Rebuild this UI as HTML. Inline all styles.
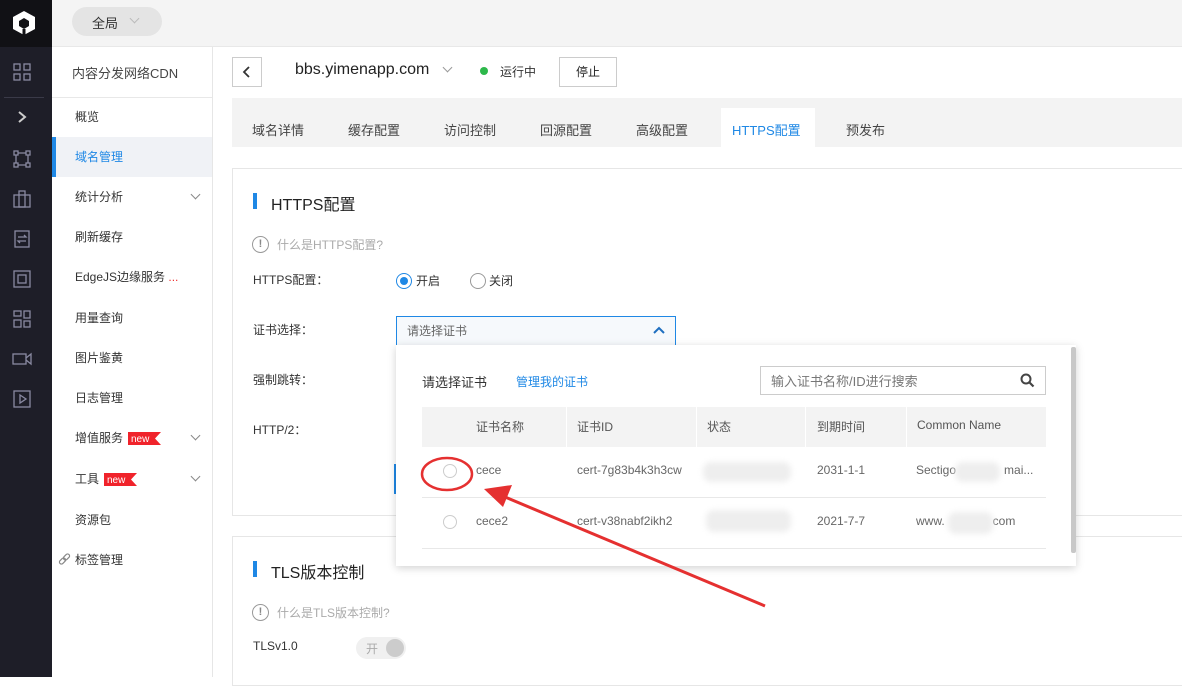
<!DOCTYPE html>
<html><head><meta charset="utf-8"><style>
*{margin:0;padding:0;box-sizing:border-box}
body{width:1182px;height:677px;overflow:hidden;position:relative;background:#fff;font-family:"Liberation Sans","Noto Sans CJK SC",sans-serif;font-size:12px;color:#333}
.a{position:absolute}
.mi{position:absolute;left:75px;font-size:12px;color:#333}
.tab{position:absolute;top:120px;font-size:13px;color:#444}
.chev{display:inline-block;width:7px;height:7px;border-right:1.5px solid #888;border-bottom:1.5px solid #888;transform:rotate(45deg)}
.th{position:absolute;top:418px;font-size:12px;color:#555}
.td{position:absolute;font-size:12px;color:#666}
.blur{position:absolute;background:#eee;border-radius:8px;filter:blur(3px)}
</style></head><body>
<div class="a" style="left:0;top:0;width:52px;height:677px;background:#1e1e28"></div>
<div class="a" style="left:0;top:0;width:52px;height:47px;background:#111115"></div>
<svg class="a" style="left:11px;top:10px" width="26" height="26" viewBox="0 0 26 26"><path d="M13 1 L24 7 V19 L13 25 L2 19 V7 Z" fill="#fff"/><path d="M13 8 L18 11 V16 L13 19 L8 16 V11 Z" fill="#111115"/><path d="M13 19 V25" stroke="#111115" stroke-width="3"/></svg>
<svg class="a" style="left:13px;top:63px" width="18" height="18"><g fill="none" stroke="#8a8aa2" stroke-width="1.3"><rect x="1" y="1" width="6" height="6"/><rect x="11" y="1" width="6" height="6"/><rect x="1" y="11" width="6" height="6"/><rect x="11" y="11" width="6" height="6"/></g></svg>
<div class="a" style="left:4px;top:97px;width:40px;height:1px;background:#3a3a48"></div>
<svg class="a" style="left:16px;top:110px" width="12" height="14"><path d="M3 2 L9 7 L3 12" fill="none" stroke="#ccc" stroke-width="2"/></svg>
<svg class="a" style="left:13px;top:150px" width="18" height="18"><g fill="none" stroke="#8a8aa2" stroke-width="1.3"><rect x="1" y="1" width="4" height="4"/><rect x="13" y="1" width="4" height="4"/><rect x="1" y="13" width="4" height="4"/><rect x="13" y="13" width="4" height="4"/><path d="M5 3H13M5 15H13M3 5V13M15 5V13"/></g></svg>
<svg class="a" style="left:13px;top:190px" width="18" height="18"><g fill="none" stroke="#8a8aa2" stroke-width="1.3"><rect x="1" y="5" width="16" height="12"/><rect x="6" y="1" width="6" height="16"/></g></svg>
<svg class="a" style="left:13px;top:230px" width="18" height="18"><g fill="none" stroke="#8a8aa2" stroke-width="1.3"><rect x="2" y="1" width="14" height="16"/><path d="M5 7H13L11 5M13 11H5L7 13"/></g></svg>
<svg class="a" style="left:13px;top:270px" width="18" height="18"><g fill="none" stroke="#8a8aa2" stroke-width="1.3"><rect x="1" y="1" width="16" height="16"/><rect x="5" y="5" width="8" height="8"/></g></svg>
<svg class="a" style="left:13px;top:310px" width="18" height="18"><g fill="none" stroke="#8a8aa2" stroke-width="1.3"><rect x="1" y="1" width="7" height="5"/><rect x="1" y="10" width="7" height="7"/><rect x="11" y="1" width="6" height="7"/><rect x="11" y="11" width="6" height="6"/></g></svg>
<svg class="a" style="left:12px;top:350px" width="20" height="18"><g fill="none" stroke="#8a8aa2" stroke-width="1.3"><rect x="1" y="4" width="13" height="10"/><path d="M14 8L19 4V14L14 10"/></g></svg>
<svg class="a" style="left:13px;top:390px" width="18" height="18"><g fill="none" stroke="#8a8aa2" stroke-width="1.3"><rect x="1" y="1" width="16" height="16"/><path d="M7 5L13 9L7 13Z"/></g></svg>
<div class="a" style="left:52px;top:0;width:1130px;height:47px;background:#f4f4f4;border-bottom:1px solid #e8e8e8"></div>
<div class="a" style="left:72px;top:7px;width:90px;height:29px;background:#e4e4e4;border-radius:15px"></div>
<div class="a" style="left:92px;top:13px;font-size:13px;color:#333">全局</div>
<span class="a chev" style="left:131px;top:15px;border-color:#bbb"></span>
<div class="a" style="left:52px;top:47px;width:161px;height:630px;background:#fff;border-right:1px solid #e6e6e6"></div>
<div class="a" style="left:72px;top:63px;font-size:13px;color:#444">内容分发网络CDN</div>
<div class="a" style="left:52px;top:97px;width:160px;height:1px;background:#e8e8e8"></div>
<div class="a" style="left:52px;top:137px;width:160px;height:40px;background:#f0f2f6"></div>
<div class="a" style="left:52px;top:137px;width:4px;height:40px;background:#1f88e5"></div>
<div class="mi" style="top:108px">概览</div>
<div class="mi" style="top:148px;color:#1f88e5">域名管理</div>
<div class="mi" style="top:188px">统计分析</div><span class="a chev" style="left:192px;top:191px"></span>
<div class="mi" style="top:228px">刷新缓存</div>
<div class="mi" style="top:268px">EdgeJS边缘服务 <span style="color:#e33">...</span></div>
<div class="mi" style="top:309px">用量查询</div>
<div class="mi" style="top:349px">图片鉴黄</div>
<div class="mi" style="top:389px">日志管理</div>
<div class="mi" style="top:429px">增值服务</div>
<svg class="a" style="left:128px;top:432px" width="33" height="13"><path d="M0 0H33L27 6.5L33 13H0Z" fill="#f0232b"/><text x="3" y="10" font-size="10" fill="#fff" font-family="Liberation Sans">new</text></svg>
<span class="a chev" style="left:192px;top:432px"></span>
<div class="mi" style="top:470px">工具</div>
<svg class="a" style="left:104px;top:473px" width="33" height="13"><path d="M0 0H33L27 6.5L33 13H0Z" fill="#f0232b"/><text x="3" y="10" font-size="10" fill="#fff" font-family="Liberation Sans">new</text></svg>
<span class="a chev" style="left:192px;top:473px"></span>
<div class="mi" style="top:511px">资源包</div>
<svg class="a" style="left:58px;top:553px" width="13" height="13"><g fill="none" stroke="#888" stroke-width="1.2"><rect x="1" y="6" width="7" height="4" rx="2" transform="rotate(-45 4.5 8)"/><rect x="5" y="2" width="7" height="4" rx="2" transform="rotate(-45 8.5 4)"/></g></svg>
<div class="mi" style="top:551px">标签管理</div>
<div class="a" style="left:232px;top:57px;width:30px;height:30px;border:1px solid #ccc;background:#fff"></div>
<svg class="a" style="left:242px;top:65px" width="10" height="14"><path d="M7 2L2 7L7 12" fill="none" stroke="#333" stroke-width="1.8"/></svg>
<div class="a" style="left:295px;top:61px;font-size:16px;color:#222">bbs.yimenapp.com</div>
<span class="a chev" style="left:444px;top:64px;border-color:#999"></span>
<div class="a" style="left:480px;top:67px;width:8px;height:8px;border-radius:50%;background:#2db84b"></div>
<div class="a" style="left:500px;top:63px;font-size:12px;color:#333">运行中</div>
<div class="a" style="left:559px;top:57px;width:58px;height:30px;border:1px solid #ccc;text-align:center;line-height:28px;font-size:12px;color:#222">停止</div>
<div class="a" style="left:232px;top:98px;width:950px;height:49px;background:#f3f3f3"></div>
<div class="a" style="left:721px;top:108px;width:94px;height:39px;background:#fff"></div>
<div class="tab" style="left:252px">域名详情</div>
<div class="tab" style="left:348px">缓存配置</div>
<div class="tab" style="left:444px">访问控制</div>
<div class="tab" style="left:540px">回源配置</div>
<div class="tab" style="left:636px">高级配置</div>
<div class="tab" style="left:732px;color:#1f88e5">HTTPS配置</div>
<div class="tab" style="left:846px">预发布</div>
<div class="a" style="left:232px;top:168px;width:960px;height:348px;border:1px solid #e6e6e6"></div>
<div class="a" style="left:253px;top:193px;width:4px;height:16px;background:#1f88e5"></div>
<div class="a" style="left:271px;top:191px;font-size:16px;color:#222">HTTPS配置</div>
<div class="a" style="left:252px;top:236px;width:17px;height:17px;border:1.5px solid #999;border-radius:50%;text-align:center;font-size:11px;line-height:14px;color:#888;font-weight:bold">!</div>
<div class="a" style="left:277px;top:236px;color:#aaa">什么是HTTPS配置?</div>
<div class="a" style="left:253px;top:271px">HTTPS配置：</div>
<div class="a" style="left:396px;top:273px;width:16px;height:16px;border:1.5px solid #1f88e5;border-radius:50%"><div style="margin:2.5px;width:8px;height:8px;border-radius:50%;background:#1f88e5"></div></div>
<div class="a" style="left:416px;top:272px">开启</div>
<div class="a" style="left:470px;top:273px;width:16px;height:16px;border:1px solid #999;border-radius:50%"></div>
<div class="a" style="left:489px;top:272px">关闭</div>
<div class="a" style="left:253px;top:321px">证书选择：</div>
<div class="a" style="left:396px;top:316px;width:280px;height:30px;border:1px solid #1f88e5;background:#f6f9fc"></div>
<div class="a" style="left:407px;top:322px;color:#666">请选择证书</div>
<svg class="a" style="left:653px;top:326px" width="12" height="9"><path d="M1 7L6 2L11 7" fill="none" stroke="#1f6fc0" stroke-width="2"/></svg>
<div class="a" style="left:253px;top:371px">强制跳转：</div>
<div class="a" style="left:253px;top:421px">HTTP/2：</div>
<div class="a" style="left:394px;top:464px;width:2px;height:30px;background:#1f88e5"></div>
<div class="a" style="left:232px;top:536px;width:960px;height:150px;border:1px solid #e6e6e6"></div>
<div class="a" style="left:253px;top:561px;width:4px;height:16px;background:#1f88e5"></div>
<div class="a" style="left:271px;top:559px;font-size:16px;color:#222">TLS版本控制</div>
<div class="a" style="left:252px;top:604px;width:17px;height:17px;border:1.5px solid #999;border-radius:50%;text-align:center;font-size:11px;line-height:14px;color:#888;font-weight:bold">!</div>
<div class="a" style="left:277px;top:604px;color:#aaa">什么是TLS版本控制?</div>
<div class="a" style="left:253px;top:639px">TLSv1.0</div>
<div class="a" style="left:356px;top:637px;width:50px;height:22px;border-radius:11px;background:#f0f0f0"></div>
<div class="a" style="left:366px;top:640px;color:#aaa">开</div>
<div class="a" style="left:386px;top:639px;width:18px;height:18px;border-radius:50%;background:#ccc"></div>
<div class="a" style="left:396px;top:345px;width:680px;height:221px;background:#fff;box-shadow:0 2px 8px rgba(0,0,0,.18)"></div>
<div class="a" style="left:1071px;top:347px;width:5px;height:206px;background:#c8c8c8;border-radius:2px"></div>
<div class="a" style="left:422px;top:372px;font-size:13px;color:#333">请选择证书</div>
<div class="a" style="left:516px;top:373px;color:#1f88e5">管理我的证书</div>
<div class="a" style="left:760px;top:366px;width:286px;height:29px;border:1px solid #ccc"></div>
<div class="a" style="left:771px;top:371px;font-size:13px;color:#777">输入证书名称/ID进行搜索</div>
<svg class="a" style="left:1020px;top:373px" width="15" height="15"><circle cx="6" cy="6" r="4.5" fill="none" stroke="#444" stroke-width="2"/><path d="M9.5 9.5L13.5 13.5" stroke="#444" stroke-width="2.2"/></svg>
<div class="a" style="left:422px;top:407px;width:624px;height:40px;background:#f3f3f3"></div>
<div class="a" style="left:566px;top:407px;width:1px;height:40px;background:#fff"></div>
<div class="a" style="left:696px;top:407px;width:1px;height:40px;background:#fff"></div>
<div class="a" style="left:805px;top:407px;width:1px;height:40px;background:#fff"></div>
<div class="a" style="left:906px;top:407px;width:1px;height:40px;background:#fff"></div>
<div class="th" style="left:476px">证书名称</div>
<div class="th" style="left:577px">证书ID</div>
<div class="th" style="left:707px">状态</div>
<div class="th" style="left:817px">到期时间</div>
<div class="th" style="left:917px">Common Name</div>
<div class="a" style="left:422px;top:497px;width:624px;height:1px;background:#e8e8e8"></div>
<div class="a" style="left:422px;top:548px;width:624px;height:1px;background:#e8e8e8"></div>
<div class="a" style="left:443px;top:464px;width:14px;height:14px;border:1px solid #ccc;border-radius:50%"></div>
<div class="a" style="left:443px;top:515px;width:14px;height:14px;border:1px solid #ccc;border-radius:50%"></div>
<div class="td" style="left:476px;top:463px">cece</div>
<div class="td" style="left:577px;top:463px">cert-7g83b4k3h3cw</div>
<div class="blur" style="left:703px;top:462px;width:88px;height:20px"></div>
<div class="td" style="left:817px;top:463px">2031-1-1</div>
<div class="td" style="left:916px;top:463px">Sectigo<span style="color:#fff">xxxxxxxx</span>mai...</div>
<div class="blur" style="left:955px;top:462px;width:45px;height:20px"></div>
<div class="td" style="left:476px;top:514px">cece2</div>
<div class="td" style="left:577px;top:514px">cert-v38nabf2ikh2</div>
<div class="blur" style="left:706px;top:510px;width:85px;height:22px"></div>
<div class="td" style="left:817px;top:514px">2021-7-7</div>
<div class="td" style="left:916px;top:514px">www.<span style="color:#fff">xxxxxxxx</span>com</div>
<div class="blur" style="left:948px;top:512px;width:45px;height:22px"></div>
<svg class="a" style="left:0;top:0" width="1182" height="677"><ellipse cx="447" cy="474" rx="25" ry="16" fill="none" stroke="#e53030" stroke-width="2.5"/><path d="M765 606 L505 497" stroke="#e53030" stroke-width="3"/><path d="M484 489 L512 485 L503 507 Z" fill="#e53030"/></svg>
</body></html>
